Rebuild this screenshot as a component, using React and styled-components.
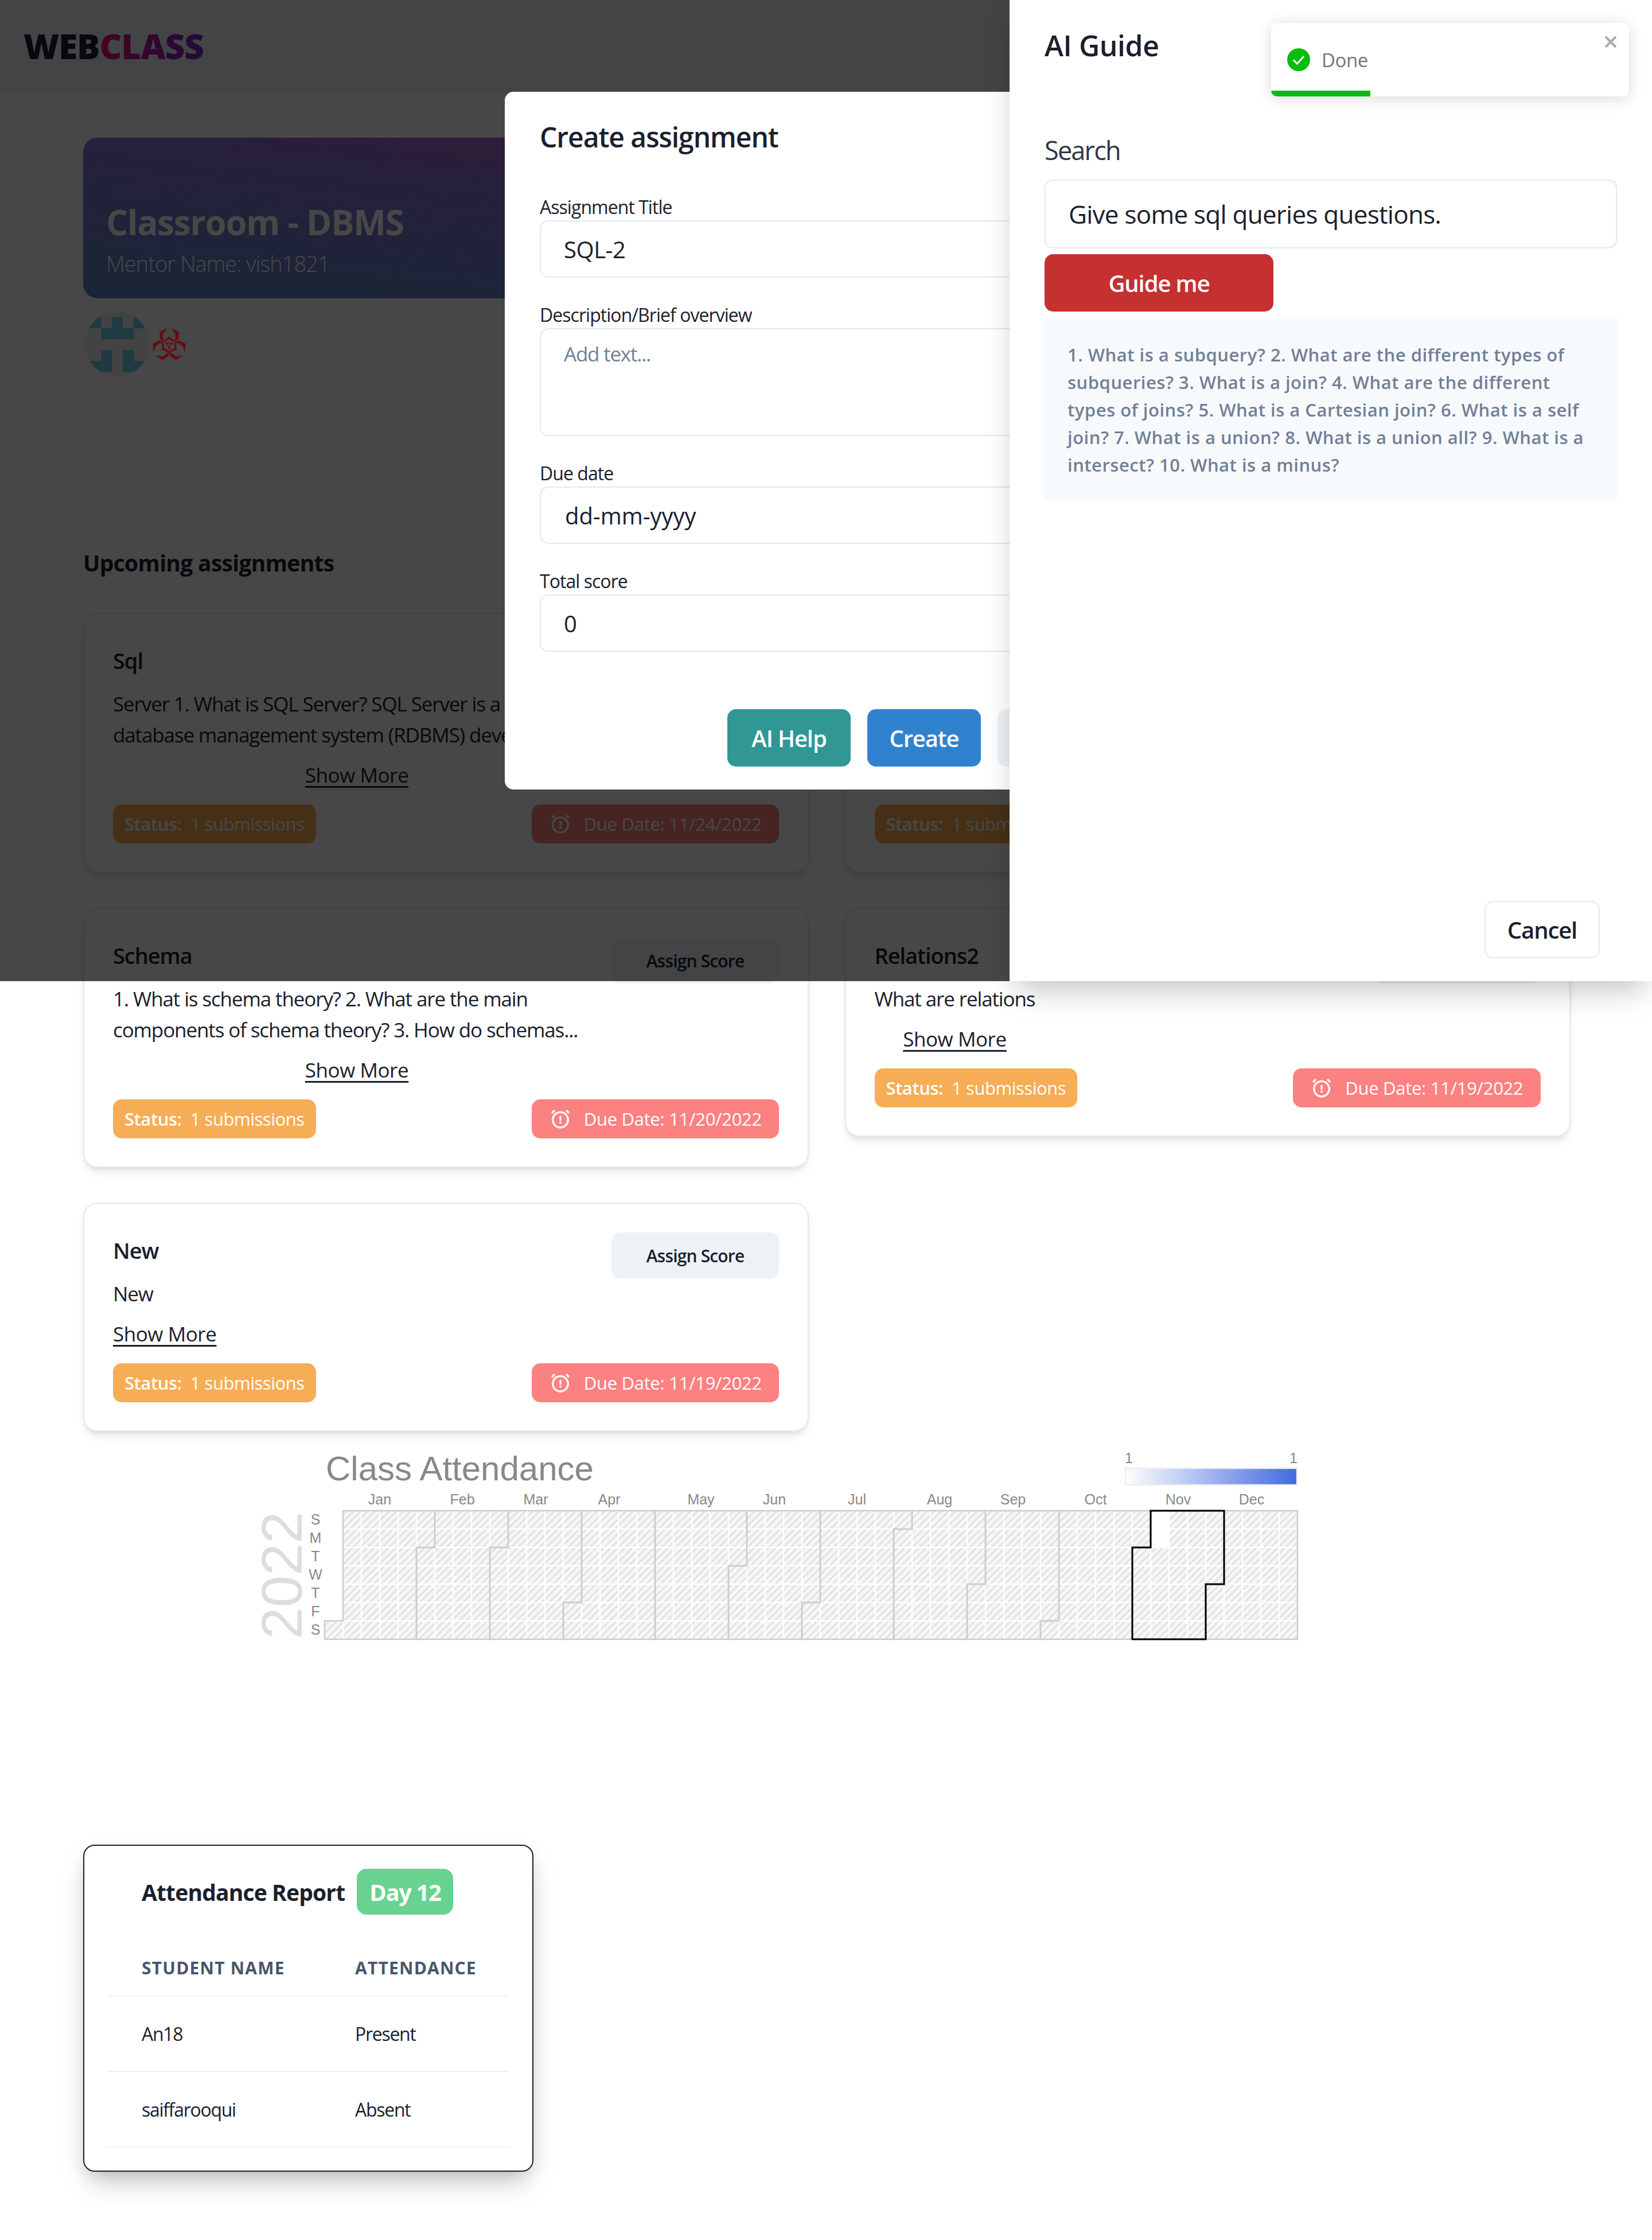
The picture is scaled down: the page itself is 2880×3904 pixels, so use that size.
import React from "react";
import styled, { createGlobalStyle } from "styled-components";
import { BiAlarmExclamation } from "react-icons/bi";

const Global = createGlobalStyle`
  html, body { margin: 0; padding: 0; background: #fff; }
  * { box-sizing: border-box; }
  body { font-family: "Open Sans", "Noto Sans", sans-serif; color: #1a202c; letter-spacing: -0.028em; }
`;

const Page = styled.div`
  position: relative;
  width: 2880px;
  min-height: 3904px;
  background: #fff;
  overflow: hidden;
`;
const Navbar = styled.header`
  height: 160px;
  background: #edf2f7;
  padding: 0 41px;
  display: flex;
  align-items: center;
`;
const Logo = styled.div`
  font-size: 60px;
  font-weight: 800;
  letter-spacing: -0.018em;
  line-height: 1;
  color: #1a202c;
`;
const LogoAccent = styled.span`
  background: linear-gradient(to right, #ff0080, #7928ca);
  -webkit-background-clip: text;
  background-clip: text;
  color: transparent;
`;
const Main = styled.main`
  padding: 80px 145px 0;
`;
const Banner = styled.section`
  height: 280px;
  border-radius: 25px;
  padding: 0 40px 36px;
  display: flex;
  flex-direction: column;
  justify-content: flex-end;
  background: linear-gradient(to top right, #5d88c4 0%, #8872d6 50%, #fa46a0 100%);
`;
const BannerTitle = styled.h1`
  margin: 0 0 5px;
  font-size: 60px;
  font-weight: 700;
  line-height: 84px;
  letter-spacing: -0.02em;
  color: #fff;
`;
const BannerSub = styled.div`
  font-size: 38px;
  font-weight: 300;
  line-height: 50px;
  letter-spacing: -0.025em;
  color: #fff;
`;
const Avatars = styled.div`
  margin: 23px 0 0 3px;
  display: flex;
  align-items: center;
  gap: 5px;
  height: 113px;
`;
const Hazard = styled.svg`
  position: relative;
  z-index: 2;
  width: 60px;
  height: 60px;
  fill: #6a0a10;
`;
const SectionTitle = styled.h2`
  margin: 295px 0 57px;
  font-size: 39px;
  font-weight: 700;
  line-height: 60px;
  letter-spacing: -0.018em;
`;
const Grid = styled.div`
  display: grid;
  grid-template-columns: 1265px 1265px;
  column-gap: 62.5px;
  row-gap: 61px;
  align-items: start;
`;
const Card = styled.article`
  border: 2px solid #e2e8f0;
  border-radius: 25px;
  padding: 50px 50px 49px;
  background: #fff;
  box-shadow: 0 10px 15px -3px rgba(0, 0, 0, 0.1), 0 4px 6px -2px rgba(0, 0, 0, 0.05);
`;
const CardHead = styled.div`
  display: flex;
  justify-content: space-between;
  align-items: flex-start;
  height: 80px;
`;
const CardTitle = styled.h3`
  margin: 0;
  font-size: 38px;
  font-weight: 600;
  line-height: 62px;
  letter-spacing: -0.028em;
`;
const AssignButton = styled.button`
  width: 292px;
  height: 80px;
  border: 0;
  border-radius: 15px;
  background: #edf2f7;
  color: #1a202c;
  font: 600 30px "Open Sans", sans-serif;
  letter-spacing: -0.028em;
`;
const Body = styled.div`
  display: ${(p) => (p.$w ? "flex" : "inline-flex")};
  flex-direction: column;
  align-items: center;
  width: ${(p) => (p.$w ? p.$w + "px" : "auto")};
`;
const Desc = styled.p`
  margin: 0;
  align-self: flex-start;
  font-size: 35px;
  line-height: 54px;
  letter-spacing: -0.032em;
  white-space: nowrap;
`;
const More = styled.a`
  margin-top: 15.5px;
  font-size: 35px;
  font-weight: 500;
  line-height: 54px;
  text-decoration: underline;
  text-underline-offset: 6px;
  text-decoration-thickness: 2.5px;
  color: #1a202c;
`;
const Pills = styled.div`
  display: flex;
  justify-content: space-between;
  margin-top: 24.5px;
`;
const Pill = styled.div`
  height: 68px;
  border-radius: 15px;
  display: flex;
  align-items: center;
  color: #fff;
  font-size: 31px;
  font-weight: 500;
  white-space: pre;
  background: ${(p) => (p.$due ? "#fc8181" : "#f6ad55")};
  padding: ${(p) => (p.$due ? "0 30px" : "0 20px")};
  letter-spacing: ${(p) => (p.$due ? "-0.009em" : "-0.015em")};
`;
const PillStrong = styled.b`
  font-weight: 600;
`;
const DueIcon = styled(BiAlarmExclamation)`
  width: 40px;
  height: 40px;
  margin-right: 21px;
`;
const Chart = styled.svg`
  display: block;
  width: 1840px;
  height: 370px;
  margin: 15px 0 0 295px;
  font-family: "Liberation Sans", Arial, sans-serif;
  letter-spacing: 0;
`;
const Report = styled.section`
  width: 785px;
  margin-top: 335px;
  padding: 40px 40px 40px;
  border: 2.5px solid #1a202c;
  border-radius: 20px;
  box-shadow: 0 25px 50px -12px rgba(0, 0, 0, 0.25), 0 10px 25px -5px rgba(0, 0, 0, 0.1);
`;
const ReportHead = styled.div`
  display: flex;
  align-items: center;
  gap: 21px;
  padding-left: 60px;
`;
const ReportTitle = styled.h3`
  margin: 0;
  font-size: 39px;
  font-weight: 700;
  letter-spacing: -0.022em;
`;
const DayBadge = styled.span`
  height: 80px;
  padding: 0 22px;
  border-radius: 17px;
  background: #68d391;
  color: #fff;
  font-size: 40px;
  font-weight: 700;
  letter-spacing: -0.035em;
  display: flex;
  align-items: center;
`;
const Table = styled.table`
  margin-top: 44px;
  width: 700px;
  border-collapse: collapse;
  table-layout: fixed;
`;
const Th = styled.th`
  height: 97px;
  padding: 0 0 0 60px;
  text-align: left;
  font-size: 30px;
  font-weight: 700;
  letter-spacing: 0.04em;
  color: #4a5568;
  border-bottom: 2.5px solid #edf2f7;
  text-transform: uppercase;
  width: ${(p) => p.$w}px;
`;
const Td = styled.td`
  height: 132px;
  padding: 0 0 0 60px;
  font-size: 32px;
  letter-spacing: -0.04em;
  border-bottom: 2.5px solid #edf2f7;
`;
const Overlay = styled.div`
  position: absolute;
  left: 0;
  top: 0;
  width: 100%;
  height: 1710px;
  background: rgba(0, 0, 0, 0.72);
  z-index: 1;
`;
const Modal = styled.div`
  position: absolute;
  z-index: 2;
  left: 880px;
  top: 160px;
  width: 1120px;
  height: 1216px;
  padding: 49px 61px 40px;
  border-radius: 15px;
  background: #fff;
`;
const ModalTitle = styled.h2`
  margin: 0 0 68px;
  font-size: 48px;
  font-weight: 600;
  line-height: 60px;
  letter-spacing: -0.022em;
`;
const Field = styled.div`
  margin-bottom: 41px;
`;
const Label = styled.label`
  display: block;
  font-size: 32px;
  line-height: 47px;
  letter-spacing: -0.03em;
`;
const Input = styled.div`
  height: ${(p) => p.$h || 100}px;
  border: 2.5px solid #e2e8f0;
  border-radius: 15px;
  padding: ${(p) => (p.$area ? "19px 40px" : "0 40px")};
  display: flex;
  align-items: ${(p) => (p.$area ? "flex-start" : "center")};
  font-size: 40px;
  color: #1a202c;
`;
const SearchInput = styled(Input)`
  font-size: 44px;
  letter-spacing: -0.017em;
`;
const Placeholder = styled.span`
  font-size: 35px;
  letter-spacing: -0.035em;
  color: #718096;
`;
const DateValue = styled.span`
  margin-left: 2px;
  letter-spacing: -0.001em;
`;
const Footer = styled.div`
  display: flex;
  justify-content: flex-end;
  gap: 29px;
  margin-top: 100px;
`;
const Btn = styled.button`
  height: 100px;
  width: ${(p) => p.$w}px;
  border: ${(p) => (p.$outline ? "2.5px solid #e2e8f0" : "0")};
  border-radius: 15px;
  background: ${(p) => p.$bg || "#fff"};
  color: ${(p) => p.$color || "#fff"};
  font: 600 40px "Open Sans", sans-serif;
  letter-spacing: -0.028em;
`;
const Drawer = styled.aside`
  position: absolute;
  z-index: 3;
  right: 0;
  top: 0;
  width: 1120px;
  height: 1710px;
  padding: 49px 61px 40px;
  background: #fff;
  display: flex;
  flex-direction: column;
  box-shadow: 0 25px 50px -12px rgba(0, 0, 0, 0.25);
`;
const DrawerTitle = styled.h2`
  margin: 0 0 123px;
  font-size: 50px;
  font-weight: 600;
  line-height: 60px;
`;
const SearchLabel = styled.div`
  font-size: 45px;
  line-height: 60px;
  letter-spacing: -0.04em;
  color: #2d3748;
  margin-bottom: 21px;
`;
const GuideWrap = styled.div`
  margin: 10px 0 9px;
`;
const Answer = styled.div`
  height: 320px;
  padding: 42px 40px;
  background: #f7fafc;
  color: #718096;
  font-size: 31px;
  font-weight: 600;
  line-height: 48px;
  letter-spacing: 0.5px;
`;
const AnswerLine = styled.span`
  display: block;
  white-space: nowrap;
`;
const DrawerFoot = styled.div`
  margin-top: auto;
  display: flex;
  justify-content: flex-end;
  padding-right: 30px;
`;
const Toast = styled.div`
  position: absolute;
  z-index: 4;
  left: 2216px;
  top: 40px;
  width: 624px;
  height: 128px;
  border-radius: 10px;
  background: #fff;
  box-shadow: 0 2.5px 25px 0 rgba(0, 0, 0, 0.1), 0 5px 38px 0 rgba(0, 0, 0, 0.05);
  overflow: hidden;
  display: flex;
  align-items: center;
  padding: 0 28px;
  gap: 20px;
  font-size: 33px;
  color: #757575;
`;
const ToastClose = styled.svg`
  position: absolute;
  right: 20px;
  top: 21px;
  width: 24px;
  height: 24px;
`;
const ToastBar = styled.div`
  position: absolute;
  left: 0;
  bottom: 0;
  height: 10px;
  background: #07bc0c;
`;

const Identicon = () => (
  <svg width="112" height="113" viewBox="0 0 112 113" aria-hidden="true">
    <defs>
      <clipPath id="ic">
        <ellipse cx="56" cy="56.5" rx="56" ry="56.5" />
      </clipPath>
    </defs>
    <g clipPath="url(#ic)">
      <rect width="112" height="113" fill="#f0f0f0" />
      <g fill="#6fcfe8">
        {[
          [0, 0], [2, 0], [4, 0],
          [1, 1], [2, 1], [3, 1],
          [1, 3], [3, 3],
          [0, 4], [1, 4], [3, 4], [4, 4],
        ].map(([c, r]) => (
          <rect key={c + "-" + r} x={9 + c * 19} y={10 + r * 19} width="19.2" height="19.2" />
        ))}
      </g>
    </g>
  </svg>
);

const BioHazardIcon = () => (
  <Hazard viewBox="30 30 180 180" aria-hidden="true">
    {[0, 120, 240].map((a) => (
      <g key={a} transform={`rotate(${a} 120 125) translate(120 125)`}>
        <polygon points="-10,-91 -50,-69 -48,-32 -24,-13 -32,-34 -32,-60" />
        <polygon points="10,-91 50,-69 48,-32 24,-13 32,-34 32,-60" />
        <polygon points="-27,-25 0,-45 27,-25 22,-18 0,-32 -22,-18" />
        <polygon points="-5,-2 5,-2 4,22 -4,22" />
      </g>
    ))}
    <polygon points="104,111 136,111 120,140" />
    <polygon points="110,116 130,116 120,131" fill="#464646" />
  </Hazard>
);

const CX = 566;
const CY = 2633;
const S = 32;
const dayMs = 86400000;
const start = Date.UTC(2021, 11, 26);
const pos = (ms) => {
  const d = Math.round((ms - start) / dayMs);
  return [Math.floor(d / 7), d % 7];
};
const days = [];
for (let t = Date.UTC(2022, 0, 1); t <= Date.UTC(2022, 11, 31); t += dayMs) days.push(pos(t));
const monthPath = (m) => {
  const [c0, r0] = pos(Date.UTC(2022, m, 1));
  const [c1, r1] = pos(Date.UTC(2022, m + 1, 0));
  const X = (c) => CX + c * S;
  const Y = (r) => CY + r * S;
  return `M${X(c0 + 1)} ${Y(r0)}H${X(c0)}V${Y(7)}H${X(c1)}V${Y(r1 + 1)}H${X(c1 + 1)}V${Y(0)}H${X(c0 + 1)}Z`;
};
const months = [
  ["Jan", 662], ["Feb", 806], ["Mar", 934], ["Apr", 1062], ["May", 1222], ["Jun", 1350],
  ["Jul", 1494], ["Aug", 1638], ["Sep", 1766], ["Oct", 1910], ["Nov", 2054], ["Dec", 2182],
];
const weekdays = ["S", "M", "T", "W", "T", "F", "S"];

const Heatmap = () => (
  <Chart viewBox="440 2510 1840 370" aria-label="Class Attendance">
    <defs>
      <pattern id="hatch" patternUnits="userSpaceOnUse" width="12.5" height="12.5">
        <rect width="12.5" height="12.5" fill="#f7f7f7" />
        <path d="M-3 3L3 -3M0 12.5L12.5 0M9.5 15.5L15.5 9.5" stroke="#dedede" strokeWidth="2.5" />
      </pattern>
      <linearGradient id="legend">
        <stop offset="0" stopColor="#ffffff" />
        <stop offset="1" stopColor="#4169e1" />
      </linearGradient>
    </defs>
    <text x="568" y="2580" fontSize="60" fill="#888">Class Attendance</text>
    <text x="1968" y="2550" fontSize="25" fill="#888" textAnchor="middle">1</text>
    <text x="2255" y="2550" fontSize="25" fill="#888" textAnchor="middle">1</text>
    <rect x="1962" y="2559" width="299" height="29" fill="url(#legend)" stroke="#eee" strokeWidth="2.5" />
    {months.map(([m, x]) => (
      <text key={m} x={x} y="2622" fontSize="25" fill="#888" textAnchor="middle">{m}</text>
    ))}
    {weekdays.map((d, i) => (
      <text key={i} x="550" y={2657 + i * 32} fontSize="25" fill="#888" textAnchor="middle">{d}</text>
    ))}
    <text transform="translate(526 2857) rotate(-90)" fontSize="100" fill="#ddd">2022</text>
    {days.map(([c, r]) => {
      const blank = c === 45 && r < 2;
      return (
        <rect
          key={c + "-" + r}
          x={CX + c * S + 1.25}
          y={CY + r * S + 1.25}
          width={S - 2.5}
          height={S - 2.5}
          fill={blank ? "#fff" : "url(#hatch)"}
        />
      );
    })}
    {months.map((_, i) => (
      <path key={i} d={monthPath(i)} fill="none" stroke="#ccc" strokeWidth="2.5" />
    ))}
    <path d={monthPath(10)} fill="none" stroke="#000" strokeWidth="3" />
  </Chart>
);

const AssignCard = ({ title, lines, due, bodyWidth }) => (
  <Card>
    <CardHead>
      <CardTitle>{title}</CardTitle>
      <AssignButton>Assign Score</AssignButton>
    </CardHead>
    <Body $w={bodyWidth}>
      {lines.map((l) => (
        <Desc key={l}>{l}</Desc>
      ))}
      <More>Show More</More>
    </Body>
    <Pills>
      <Pill>
        <PillStrong>Status:</PillStrong>
        {"  1 submissions"}
      </Pill>
      <Pill $due>
        <DueIcon />
        {"Due Date: " + due}
      </Pill>
    </Pills>
  </Card>
);

export default function App() {
  return (
    <Page>
      <Global />
      <Navbar>
        <Logo>
          WEB<LogoAccent>CLASS</LogoAccent>
        </Logo>
      </Navbar>
      <Main>
        <Banner>
          <BannerTitle>Classroom - DBMS</BannerTitle>
          <BannerSub>Mentor Name: vish1821</BannerSub>
        </Banner>
        <Avatars>
          <Identicon />
          <BioHazardIcon />
        </Avatars>
        <SectionTitle>Upcoming assignments</SectionTitle>
        <Grid>
          <AssignCard
            title="Sql"
            lines={[
              "Server 1. What is SQL Server? SQL Server is a relational",
              "database management system (RDBMS) developed by...",
            ]}
            due="11/24/2022"
            bodyWidth={850}
          />
          <AssignCard
            title="Relations"
            lines={["What are relations and how are they", "used in a database management..."]}
            due="11/20/2022"
            bodyWidth={850}
          />
          <AssignCard
            title="Schema"
            lines={[
              "1. What is schema theory? 2. What are the main",
              "components of schema theory? 3. How do schemas...",
            ]}
            due="11/20/2022"
            bodyWidth={850}
          />
          <AssignCard title="Relations2" lines={["What are relations"]} due="11/19/2022" />
          <AssignCard title="New" lines={["New"]} due="11/19/2022" />
        </Grid>
        <Heatmap />
        <Report>
          <ReportHead>
            <ReportTitle>Attendance Report</ReportTitle>
            <DayBadge>Day 12</DayBadge>
          </ReportHead>
          <Table>
            <thead>
              <tr>
                <Th $w={372}>Student Name</Th>
                <Th $w={328}>Attendance</Th>
              </tr>
            </thead>
            <tbody>
              <tr>
                <Td>An18</Td>
                <Td>Present</Td>
              </tr>
              <tr>
                <Td>saiffarooqui</Td>
                <Td>Absent</Td>
              </tr>
            </tbody>
          </Table>
        </Report>
      </Main>

      <Overlay />

      <Modal>
        <ModalTitle>Create assignment</ModalTitle>
        <Field>
          <Label>Assignment Title</Label>
          <Input>SQL-2</Input>
        </Field>
        <Field>
          <Label>Description/Brief overview</Label>
          <Input $h={188} $area>
            <Placeholder>Add text...</Placeholder>
          </Input>
        </Field>
        <Field>
          <Label>Due date</Label>
          <Input>
            <DateValue>dd-mm-yyyy</DateValue>
          </Input>
        </Field>
        <Field>
          <Label>Total score</Label>
          <Input>0</Input>
        </Field>
        <Footer>
          <Btn $w={215} $bg="#319795">AI Help</Btn>
          <Btn $w={198} $bg="#3182ce">Create</Btn>
          <Btn $w={200} $bg="#edf2f7" $color="#1a202c">Cancel</Btn>
        </Footer>
      </Modal>

      <Drawer>
        <DrawerTitle>AI Guide</DrawerTitle>
        <SearchLabel>Search</SearchLabel>
        <SearchInput $h={120}>Give some sql queries questions.</SearchInput>
        <GuideWrap>
          <Btn $w={399} $bg="#c53030">Guide me</Btn>
        </GuideWrap>
        <Answer>
          <AnswerLine>1. What is a subquery? 2. What are the different types of</AnswerLine>
          <AnswerLine>subqueries? 3. What is a join? 4. What are the different</AnswerLine>
          <AnswerLine>types of joins? 5. What is a Cartesian join? 6. What is a self</AnswerLine>
          <AnswerLine>join? 7. What is a union? 8. What is a union all? 9. What is a</AnswerLine>
          <AnswerLine>intersect? 10. What is a minus?</AnswerLine>
        </Answer>
        <DrawerFoot>
          <Btn $w={201} $outline $color="#1a202c">Cancel</Btn>
        </DrawerFoot>
      </Drawer>

      <Toast>
        <svg width="40" height="40" viewBox="0 0 40 40" aria-hidden="true">
          <circle cx="20" cy="20" r="20" fill="#07bc0c" />
          <path d="M11 20.5l6.5 6.5L29 14" fill="none" stroke="#fff" strokeWidth="3" />
        </svg>
        Done
        <ToastClose viewBox="0 0 24 24" aria-hidden="true">
          <path d="M3 3l18 18M21 3L3 21" stroke="#aaa" strokeWidth="4" />
        </ToastClose>
        <ToastBar style={{ width: 173 }} />
      </Toast>
    </Page>
  );
}
